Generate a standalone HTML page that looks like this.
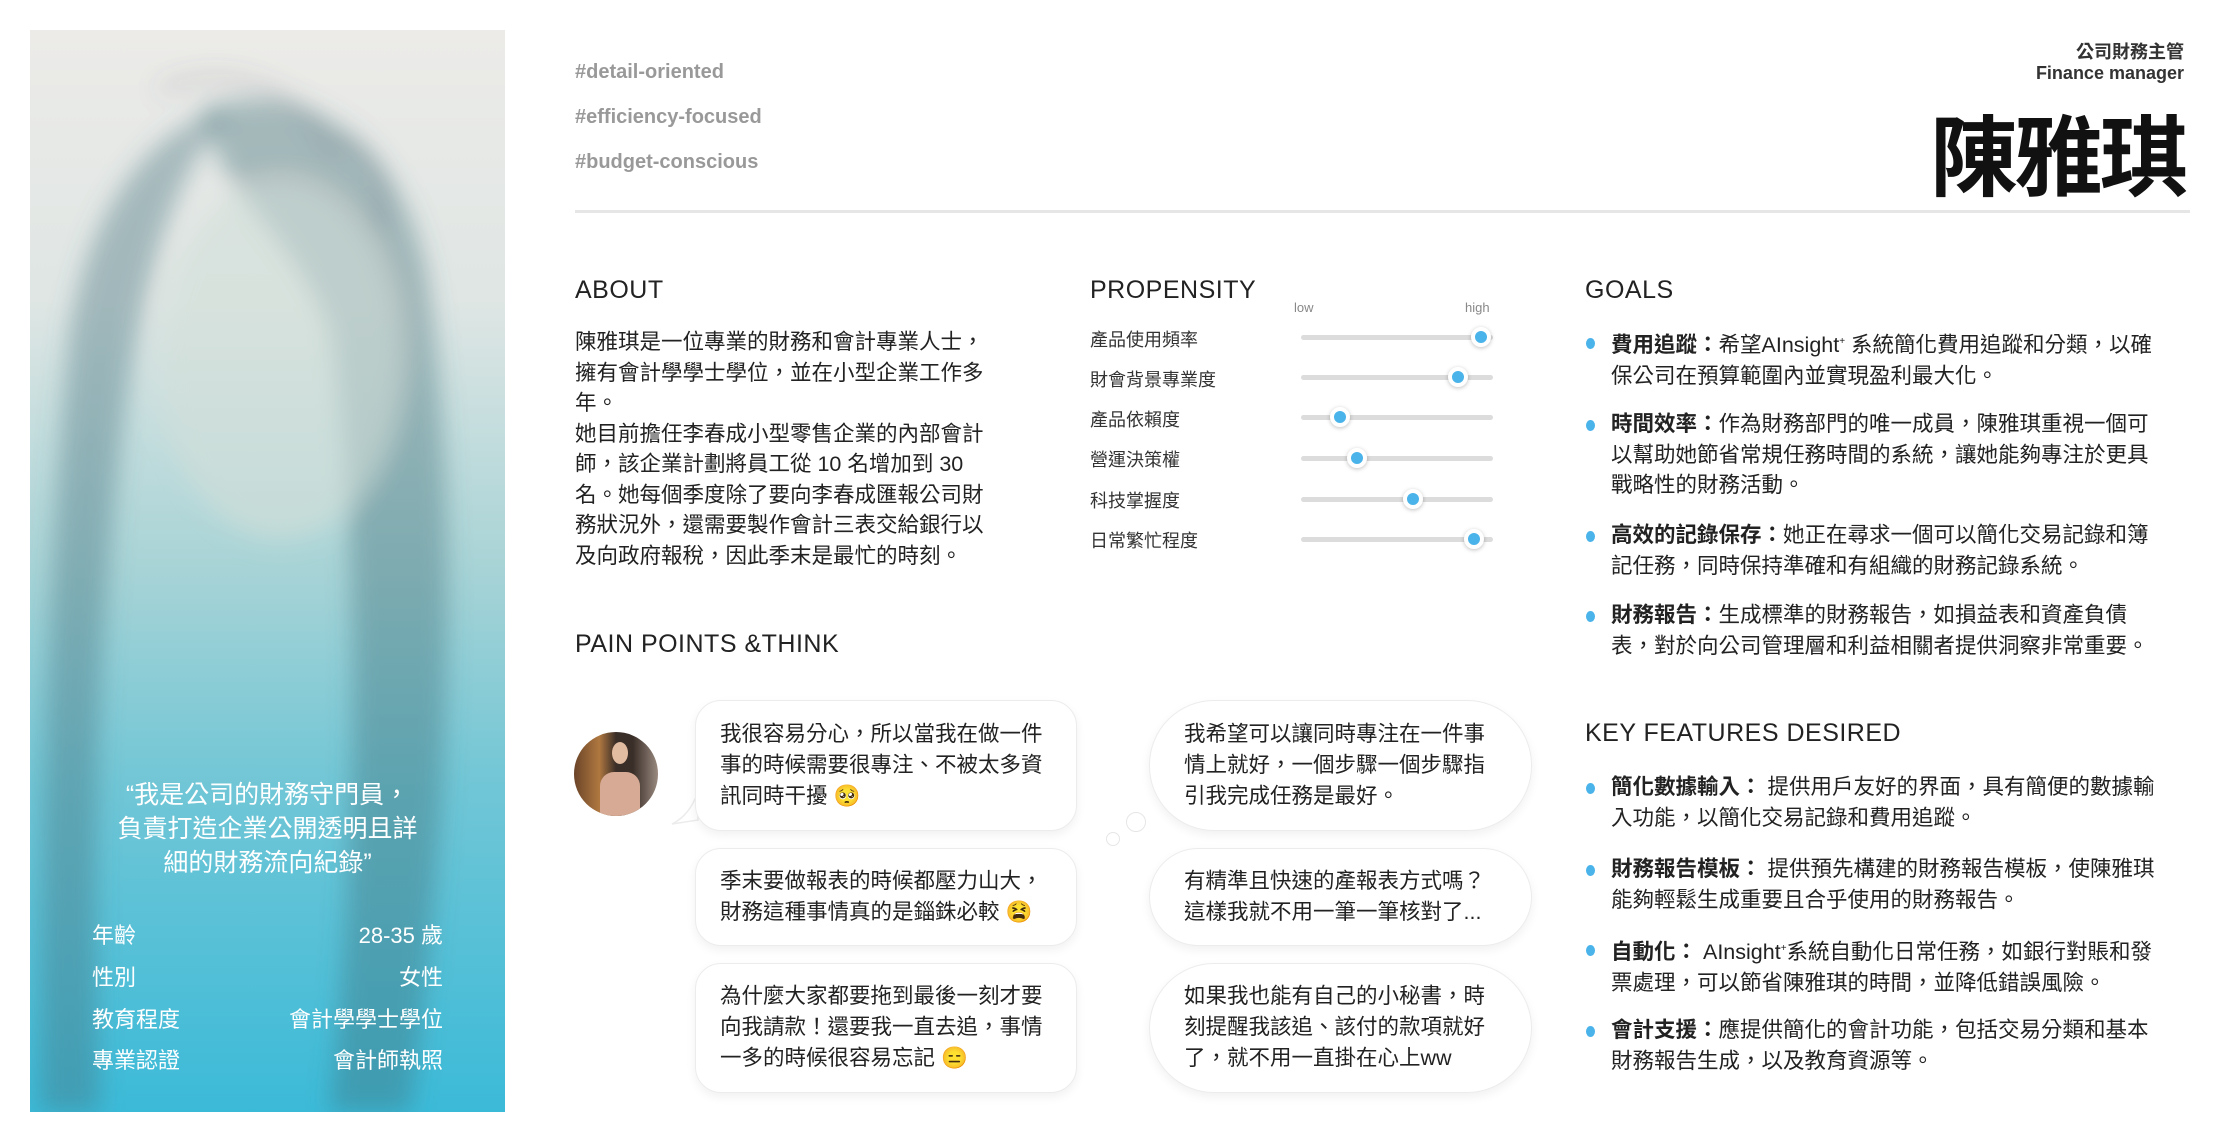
<!DOCTYPE html>
<html><head><meta charset="utf-8"><style>
*{margin:0;padding:0;box-sizing:border-box}
body{width:2229px;height:1130px;background:#fff;position:relative;overflow:hidden;font-family:"Liberation Sans","Noto Sans CJK TC",sans-serif;color:#222}
.a{position:absolute;white-space:nowrap}
.tag{font-size:20px;font-weight:bold;color:#999;left:575px}
h2{position:absolute;font-size:25px;font-weight:normal;color:#222;letter-spacing:0.5px}
.t{font-size:21.5px;line-height:30.5px;color:#222}
.pl{font-size:18px;color:#333;left:1090px}
.tr{position:absolute;left:1301px;width:192px;height:5px;background:#dcdcdc;border-radius:3px}
.kn{position:absolute;width:20px;height:20px;border-radius:50%;background:#4ab3ea;border:4px solid #fff;box-shadow:0 1px 4px rgba(0,0,0,.25)}
.dot{position:absolute;width:9px;height:11px;border-radius:50%;background:#4ab3ea}
.bub{position:absolute;background:#fff;border:1.5px solid #ececec;box-shadow:0 4px 10px rgba(0,0,0,.06);font-size:21.5px;line-height:31px;color:#222;padding-left:24px;white-space:nowrap}
.l{left:695px;width:382px;border-radius:26px}
.r{left:1149px;width:383px;border-radius:65px;padding-left:34px}
.st{font-size:22px;color:#fff}
</style></head><body>

<div class="a" style="left:30px;top:30px;width:475px;height:1082px;overflow:hidden;background:linear-gradient(180deg,#ecebe8 0%,#dfe6e4 25%,#a7d3d6 50%,#70c6d6 70%,#3bbad8 100%)">
<svg width="475" height="1082" style="position:absolute;left:0;top:0">
<defs><filter id="b"><feGaussianBlur stdDeviation="12"/></filter></defs>
<g filter="url(#b)">
<path d="M170 80 C280 40 380 120 400 260 C430 500 420 800 380 1082 L300 1082 C330 800 330 500 300 300 C260 200 200 180 170 80Z" fill="#3e6d78" opacity=".4"/>
<ellipse cx="250" cy="330" rx="120" ry="180" fill="#d2dfd8" opacity=".6"/>
<path d="M40 300 C60 170 130 90 200 80 C140 150 110 250 90 420 C70 600 60 800 70 1082 L10 1082 C10 800 20 500 40 300Z" fill="#45737c" opacity=".4"/>
<path d="M130 60 C200 30 270 60 300 120 C330 100 360 140 350 200" stroke="#556" stroke-width="8" fill="none" opacity=".25"/>
</g>
</svg>
<div class="a" style="left:0;top:748px;width:475px;text-align:center;color:#fff;font-size:25px;line-height:34px;white-space:normal">“我是公司的財務守門員，<br>負責打造企業公開透明且詳<br>細的財務流向紀錄”</div>
<div class="a st" style="left:62px;top:888px">年齡</div><div class="a st" style="right:62px;top:888px">28-35 歲</div>
<div class="a st" style="left:62px;top:930px">性別</div><div class="a st" style="right:62px;top:930px">女性</div>
<div class="a st" style="left:62px;top:972px">教育程度</div><div class="a st" style="right:62px;top:972px">會計學學士學位</div>
<div class="a st" style="left:62px;top:1013px">專業認證</div><div class="a st" style="right:62px;top:1013px">會計師執照</div>
</div>

<div class="a tag" style="top:61px">#detail-oriented</div>
<div class="a tag" style="top:106px">#efficiency-focused</div>
<div class="a tag" style="top:151px">#budget-conscious</div>

<div class="a" style="right:45px;top:38px;font-size:18px;font-weight:bold;color:#333">公司財務主管</div>
<div class="a" style="right:45px;top:63px;font-size:18px;font-weight:bold;color:#333">Finance manager</div>
<div class="a" style="right:44px;top:88px;font-size:88px;font-weight:bold;color:#111;letter-spacing:-3px">陳雅琪</div>

<div class="a" style="left:575px;top:210px;width:1615px;height:3px;background:#e6e6e6"></div>

<h2 style="left:575px;top:276px">ABOUT</h2>
<div class="a t" style="left:575px;top:327px">陳雅琪是一位專業的財務和會計專業人士，<br>擁有會計學學士學位，並在小型企業工作多<br>年。<br>她目前擔任李春成小型零售企業的內部會計<br>師，該企業計劃將員工從 10 名增加到 30<br>名。她每個季度除了要向李春成匯報公司財<br>務狀況外，還需要製作會計三表交給銀行以<br>及向政府報稅，因此季末是最忙的時刻。</div>

<h2 style="left:1090px;top:276px">PROPENSITY</h2>
<div class="a" style="left:1294px;top:300px;font-size:13px;color:#888">low</div>
<div class="a" style="left:1465px;top:300px;font-size:13px;color:#888">high</div>
<div class="a pl" style="top:326px">產品使用頻率</div><div class="tr" style="top:335px"></div><div class="kn" style="left:1471px;top:327px"></div>
<div class="a pl" style="top:366px">財會背景專業度</div><div class="tr" style="top:375px"></div><div class="kn" style="left:1448px;top:367px"></div>
<div class="a pl" style="top:406px">產品依賴度</div><div class="tr" style="top:415px"></div><div class="kn" style="left:1330px;top:407px"></div>
<div class="a pl" style="top:446px">營運決策權</div><div class="tr" style="top:456px"></div><div class="kn" style="left:1347px;top:448px"></div>
<div class="a pl" style="top:487px">科技掌握度</div><div class="tr" style="top:497px"></div><div class="kn" style="left:1403px;top:489px"></div>
<div class="a pl" style="top:527px">日常繁忙程度</div><div class="tr" style="top:537px"></div><div class="kn" style="left:1464px;top:529px"></div>

<h2 style="left:1585px;top:276px">GOALS</h2>
<div class="dot" style="left:1586px;top:338px"></div>
<div class="a t" style="left:1611px;top:327px"><b>費用追蹤：</b>希望AInsight<sup style="font-size:10px">+</sup> 系統簡化費用追蹤和分類，以確<br>保公司在預算範圍內並實現盈利最大化。</div>
<div class="dot" style="left:1586px;top:420px"></div>
<div class="a t" style="left:1611px;top:409px"><b>時間效率：</b>作為財務部門的唯一成員，陳雅琪重視一個可<br>以幫助她節省常規任務時間的系統，讓她能夠專注於更具<br>戰略性的財務活動。</div>
<div class="dot" style="left:1586px;top:531px"></div>
<div class="a t" style="left:1611px;top:520px"><b>高效的記錄保存：</b>她正在尋求一個可以簡化交易記錄和簿<br>記任務，同時保持準確和有組織的財務記錄系統。</div>
<div class="dot" style="left:1586px;top:611px"></div>
<div class="a t" style="left:1611px;top:600px"><b>財務報告：</b>生成標準的財務報告，如損益表和資產負債<br>表，對於向公司管理層和利益相關者提供洞察非常重要。</div>

<h2 style="left:1585px;top:719px">KEY FEATURES DESIRED</h2>
<div class="dot" style="left:1586px;top:783px"></div>
<div class="a t" style="left:1611px;top:772px"><b>簡化數據輸入：</b> 提供用戶友好的界面，具有簡便的數據輸<br>入功能，以簡化交易記錄和費用追蹤。</div>
<div class="dot" style="left:1586px;top:865px"></div>
<div class="a t" style="left:1611px;top:854px"><b>財務報告模板：</b> 提供預先構建的財務報告模板，使陳雅琪<br>能夠輕鬆生成重要且合乎使用的財務報告。</div>
<div class="dot" style="left:1586px;top:945px"></div>
<div class="a t" style="left:1611px;top:934px"><b>自動化：</b> AInsight<sup style="font-size:10px">+</sup>系統自動化日常任務，如銀行對賬和發<br>票處理，可以節省陳雅琪的時間，並降低錯誤風險。</div>
<div class="dot" style="left:1586px;top:1026px"></div>
<div class="a t" style="left:1611px;top:1015px"><b>會計支援：</b>應提供簡化的會計功能，包括交易分類和基本<br>財務報告生成，以及教育資源等。</div>

<h2 style="left:575px;top:630px">PAIN POINTS &amp;THINK</h2>

<div class="a" style="left:574px;top:732px;width:84px;height:84px;border-radius:50%;overflow:hidden;background:linear-gradient(90deg,#6a4428,#b07840 30%,#3a2e28 50%,#3a2e28 70%,#9a8a80)">
<div class="a" style="left:38px;top:10px;width:16px;height:22px;border-radius:50%;background:#e2bca0"></div>
<div class="a" style="left:26px;top:40px;width:40px;height:50px;border-radius:14px 14px 0 0;background:#d6aa94"></div>
</div>
<svg class="a" style="left:670px;top:790px" width="30" height="40"><path d="M28 2 L28 30 L2 34 C14 28 22 18 28 2Z" fill="#fff" stroke="#ececec" stroke-width="1.5"/></svg>

<div class="bub l" style="top:700px;height:131px;padding-top:18px">我很容易分心，所以當我在做一件<br>事的時候需要很專注、不被太多資<br>訊同時干擾 🥺</div>
<div class="bub l" style="top:848px;height:98px;padding-top:17px">季末要做報表的時候都壓力山大，<br>財務這種事情真的是錙銖必較 😫</div>
<div class="bub l" style="top:963px;height:130px;padding-top:17px">為什麼大家都要拖到最後一刻才要<br>向我請款！還要我一直去追，事情<br>一多的時候很容易忘記 😑</div>

<div class="a" style="left:1106px;top:832px;width:14px;height:14px;border-radius:50%;border:1.5px solid #e6e6e6;background:#fff"></div>
<div class="a" style="left:1126px;top:812px;width:20px;height:20px;border-radius:50%;border:1.5px solid #e6e6e6;background:#fff"></div>

<div class="bub r" style="top:700px;height:131px;padding-top:18px">我希望可以讓同時專注在一件事<br>情上就好，一個步驟一個步驟指<br>引我完成任務是最好。</div>
<div class="bub r" style="top:848px;height:98px;padding-top:17px">有精準且快速的產報表方式嗎？<br>這樣我就不用一筆一筆核對了...</div>
<div class="bub r" style="top:963px;height:130px;padding-top:17px">如果我也能有自己的小秘書，時<br>刻提醒我該追、該付的款項就好<br>了，就不用一直掛在心上ww</div>

</body></html>
